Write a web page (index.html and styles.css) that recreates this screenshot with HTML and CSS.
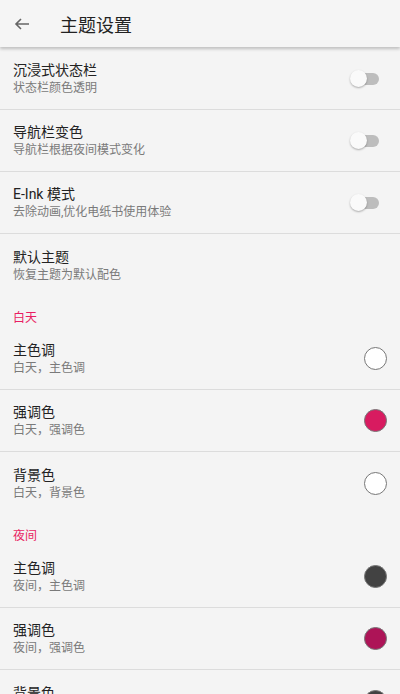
FILE: index.html
```html
<!DOCTYPE html>
<html lang="zh-CN">
<head>
    <meta charset="UTF-8">
    <meta name="viewport" content="width=device-width, initial-scale=1.0">
    <title>主题设置</title>
    <link rel="stylesheet" href="styles.css">
</head>
<body>
    <header class="toolbar">
        <svg class="back_icon" width="16" height="14" viewBox="0 0 16 14">
            <path d="M15 7H2M7 2L2 7l5 5" fill="none" stroke="#666" stroke-width="1.6"/>
        </svg>
        <h1 class="toolbar_title">主题设置</h1>
    </header>

    <main class="pref_list">
        <div class="pref_item divider">
            <div class="pref_text">
                <div class="pref_title">沉浸式状态栏</div>
                <div class="pref_summary">状态栏颜色透明</div>
            </div>
            <div class="switch"><span class="switch_thumb"></span></div>
        </div>
        <div class="pref_item divider">
            <div class="pref_text">
                <div class="pref_title">导航栏变色</div>
                <div class="pref_summary">导航栏根据夜间模式变化</div>
            </div>
            <div class="switch"><span class="switch_thumb"></span></div>
        </div>
        <div class="pref_item divider">
            <div class="pref_text">
                <div class="pref_title">E-Ink 模式</div>
                <div class="pref_summary">去除动画,优化电纸书使用体验</div>
            </div>
            <div class="switch"><span class="switch_thumb"></span></div>
        </div>
        <div class="pref_item">
            <div class="pref_text">
                <div class="pref_title">默认主题</div>
                <div class="pref_summary">恢复主题为默认配色</div>
            </div>
        </div>

        <div class="pref_category">白天</div>
        <div class="pref_item divider">
            <div class="pref_text">
                <div class="pref_title">主色调</div>
                <div class="pref_summary">白天，主色调</div>
            </div>
            <span class="color_dot dot_white"></span>
        </div>
        <div class="pref_item divider">
            <div class="pref_text">
                <div class="pref_title">强调色</div>
                <div class="pref_summary">白天，强调色</div>
            </div>
            <span class="color_dot dot_pink"></span>
        </div>
        <div class="pref_item">
            <div class="pref_text">
                <div class="pref_title">背景色</div>
                <div class="pref_summary">白天，背景色</div>
            </div>
            <span class="color_dot dot_white"></span>
        </div>

        <div class="pref_category">夜间</div>
        <div class="pref_item divider">
            <div class="pref_text">
                <div class="pref_title">主色调</div>
                <div class="pref_summary">夜间，主色调</div>
            </div>
            <span class="color_dot dot_dark"></span>
        </div>
        <div class="pref_item divider">
            <div class="pref_text">
                <div class="pref_title">强调色</div>
                <div class="pref_summary">夜间，强调色</div>
            </div>
            <span class="color_dot dot_berry"></span>
        </div>
        <div class="pref_item">
            <div class="pref_text">
                <div class="pref_title">背景色</div>
                <div class="pref_summary">夜间，背景色</div>
            </div>
            <span class="color_dot dot_dark"></span>
        </div>
    </main>
</body>
</html>
```

FILE: styles.css
```css
/* General */
*{
    font-family: Roboto, "Noto Sans CJK SC", sans-serif;
    box-sizing: border-box;
}
html, body{
    margin: 0px;
    padding: 0px;
    background-color: #f4f4f4;
}
body{
    height: 694px;
    overflow: hidden;
}

/* Toolbar */
.toolbar{
    position: relative;
    z-index: 2;
    height: 47px;
    display: flex;
    align-items: center;
    padding-left: 14px;
    background-color: #f5f5f5;
    box-shadow: 0px 2px 3px rgba(0, 0, 0, 0.22);
}
.back_icon{
    width: 16px;
    height: 14px;
}
.toolbar_title{
    margin: 0px 0px 0px 30px;
    font-size: 18px;
    font-weight: normal;
    color: #222;
}

/* Preference list */
.pref_list{
    display: flex;
    flex-direction: column;
    padding-top: 1px;
}
.pref_item{
    height: 62px;
    display: flex;
    align-items: center;
    justify-content: space-between;
    padding: 0px 13px;
}
.divider{
    border-bottom: 1px solid #dcdcdc;
}
.pref_text{
    display: flex;
    flex-direction: column;
    gap: 3px;
}
.pref_title{
    font-size: 14px;
    line-height: 16px;
    color: #222;
}
.pref_summary{
    font-size: 12px;
    line-height: 14px;
    color: #7a7a7a;
}
.pref_category{
    height: 32px;
    display: flex;
    align-items: flex-end;
    padding: 0px 13px 2px 13px;
    font-size: 12px;
    line-height: 16px;
    color: #e91e63;
}

/* Switch */
.switch{
    position: relative;
    width: 28px;
    height: 12px;
    margin-right: 8px;
    border-radius: 6px;
    background-color: #bdbdbd;
}
.switch_thumb{
    position: absolute;
    left: -1px;
    top: -3px;
    width: 17px;
    height: 17px;
    border-radius: 50%;
    background-color: #fafafa;
    box-shadow: 0px 1px 2px rgba(0, 0, 0, 0.3);
}

/* Color dots */
.color_dot{
    width: 23px;
    height: 23px;
    border-radius: 50%;
    border: 1px solid #777;
}
.dot_white{
    background-color: #ffffff;
}
.dot_pink{
    background-color: #d81b60;
}
.dot_dark{
    background-color: #424242;
}
.dot_berry{
    background-color: #ad1457;
}
```
